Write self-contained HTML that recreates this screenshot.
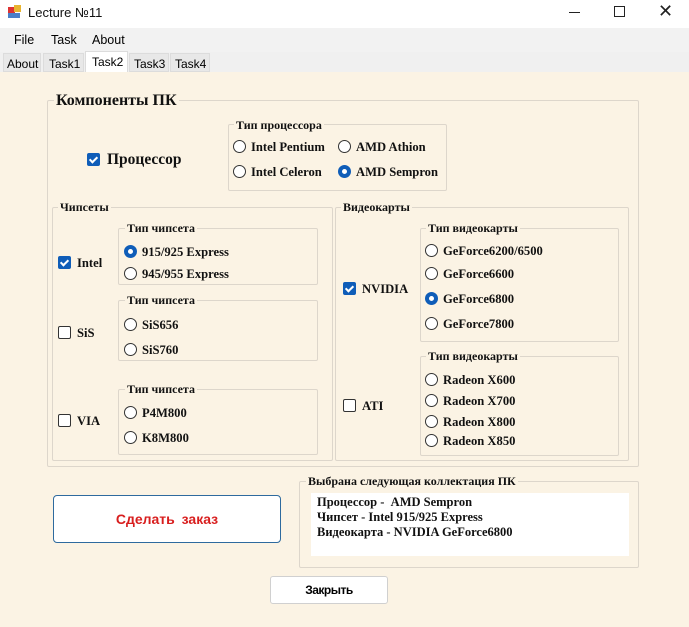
<!DOCTYPE html><html><head><meta charset="utf-8"><style>
*{margin:0;padding:0;box-sizing:border-box}
body{width:689px;height:627px;position:relative;background:#fbf3e4;font-family:"Liberation Serif",serif;overflow:hidden}
.a{position:absolute}
.s{font-family:"Liberation Sans",sans-serif}
.g{position:absolute;border:1px solid #ddd6cb;border-radius:2px}
.lg{position:absolute;background:#fbf3e4;font-weight:bold;font-size:12px;padding:0 2px;line-height:14px;color:#111}
.r{position:absolute;font-weight:bold;font-size:12.6px;color:#111;line-height:14px;padding-left:18px;white-space:nowrap}
.r:before{content:"";position:absolute;left:0;top:0;width:13px;height:13px;border:1px solid #333;border-radius:50%;background:#fff;box-sizing:border-box}
.r.on:before{border:4px solid #0f5db8;background:#fff}
.c{position:absolute;font-weight:bold;font-size:12.6px;color:#111;line-height:14px;padding-left:19px;white-space:nowrap}
.c:before{content:"";position:absolute;left:0;top:0;width:13px;height:13px;border:1px solid #333;border-radius:2px;background:#fff;box-sizing:border-box}
.c.on:before{background:#0f5db8;border-color:#0f5db8}
.c.on:after{content:"";position:absolute;left:4px;top:2px;width:3px;height:6px;border:solid #fff;border-width:0 2px 2px 0;transform:rotate(45deg)}
</style></head><body>
<div class="a" style="left:0;top:0;width:689px;height:28px;background:#fff"></div>
<div class="a" style="left:8px;top:7px;width:7px;height:6px;background:#d33"></div>
<div class="a" style="left:14px;top:5px;width:7px;height:7px;background:#e8b430"></div>
<div class="a" style="left:8px;top:13px;width:12px;height:5px;background:#4a7fc8"></div>
<div class="a s" style="left:28px;top:5px;font-size:13px;color:#111">Lecture №11</div>
<div class="a" style="left:569px;top:12px;width:11px;height:1px;background:#222"></div>
<div class="a" style="left:614px;top:6px;width:11px;height:11px;border:1px solid #222"></div>
<div class="a s" style="left:658px;top:1px;font-size:18px;color:#222">✕</div>
<div class="a" style="left:0;top:28px;width:689px;height:24px;background:#f2f2f2"></div>
<div class="a s" style="left:14px;top:33px;font-size:12.5px">File</div>
<div class="a s" style="left:51px;top:33px;font-size:12.5px">Task</div>
<div class="a s" style="left:92px;top:33px;font-size:12.5px">About</div>
<div class="a" style="left:0;top:52px;width:689px;height:20px;background:#f0f0f0"></div>
<div class="a s" style="left:3px;top:53px;width:38px;height:19px;background:#e8e8e8;border:1px solid #dcdcdc;font-size:12px;padding:3px 3px">About</div>
<div class="a s" style="left:43px;top:53px;width:41px;height:19px;background:#e8e8e8;border:1px solid #dcdcdc;font-size:12px;padding:3px 5px">Task1</div>
<div class="a s" style="left:85px;top:51px;width:43px;height:21px;background:#fff;border:1px solid #dcdcdc;border-bottom:none;font-size:12px;padding:3px 6px">Task2</div>
<div class="a s" style="left:129px;top:53px;width:40px;height:19px;background:#e8e8e8;border:1px solid #dcdcdc;font-size:12px;padding:3px 4px">Task3</div>
<div class="a s" style="left:170px;top:53px;width:40px;height:19px;background:#e8e8e8;border:1px solid #dcdcdc;font-size:12px;padding:3px 4px">Task4</div>

<div class="g" style="left:47px;top:100px;width:592px;height:367px"></div>
<div class="lg" style="left:54px;top:92px;font-size:16px;line-height:17px">Компоненты ПК</div>
<div class="c on" style="left:87px;top:153px;font-size:15.5px;padding-left:20px;line-height:14px"><span style="position:relative;top:0px">Процессор</span></div>

<div class="g" style="left:228px;top:124px;width:219px;height:67px"></div>
<div class="lg" style="left:234px;top:118px">Тип процессора</div>
<div class="r" style="left:233px;top:140px">Intel Pentium</div>
<div class="r" style="left:338px;top:140px">AMD Athion</div>
<div class="r" style="left:233px;top:165px">Intel Celeron</div>
<div class="r on" style="left:338px;top:165px">AMD Sempron</div>

<div class="g" style="left:52px;top:207px;width:281px;height:254px"></div>
<div class="lg" style="left:58px;top:200px">Чипсеты</div>
<div class="c on" style="left:58px;top:256px">Intel</div>
<div class="c" style="left:58px;top:326px">SiS</div>
<div class="c" style="left:58px;top:414px">VIA</div>
<div class="g" style="left:118px;top:228px;width:200px;height:57px"></div>
<div class="lg" style="left:125px;top:221px">Тип чипсета</div>
<div class="r on" style="left:124px;top:245px">915/925 Express</div>
<div class="r" style="left:124px;top:267px">945/955 Express</div>
<div class="g" style="left:118px;top:300px;width:200px;height:61px"></div>
<div class="lg" style="left:125px;top:293px">Тип чипсета</div>
<div class="r" style="left:124px;top:318px">SiS656</div>
<div class="r" style="left:124px;top:343px">SiS760</div>
<div class="g" style="left:118px;top:389px;width:200px;height:66px"></div>
<div class="lg" style="left:125px;top:382px">Тип чипсета</div>
<div class="r" style="left:124px;top:406px">P4M800</div>
<div class="r" style="left:124px;top:431px">K8M800</div>

<div class="g" style="left:335px;top:207px;width:294px;height:254px"></div>
<div class="lg" style="left:341px;top:200px">Видеокарты</div>
<div class="c on" style="left:343px;top:282px">NVIDIA</div>
<div class="c" style="left:343px;top:399px">ATI</div>
<div class="g" style="left:420px;top:228px;width:199px;height:114px"></div>
<div class="lg" style="left:426px;top:221px">Тип видеокарты</div>
<div class="r" style="left:425px;top:244px">GeForce6200/6500</div>
<div class="r" style="left:425px;top:267px">GeForce6600</div>
<div class="r on" style="left:425px;top:292px">GeForce6800</div>
<div class="r" style="left:425px;top:317px">GeForce7800</div>
<div class="g" style="left:420px;top:356px;width:199px;height:100px"></div>
<div class="lg" style="left:426px;top:349px">Тип видеокарты</div>
<div class="r" style="left:425px;top:373px">Radeon X600</div>
<div class="r" style="left:425px;top:394px">Radeon X700</div>
<div class="r" style="left:425px;top:415px">Radeon X800</div>
<div class="r" style="left:425px;top:434px">Radeon X850</div>

<div class="a s" style="left:53px;top:495px;width:228px;height:48px;background:#fff;border:1px solid #2e6a9e;border-radius:4px;color:#d81e1e;font-weight:bold;font-size:14px;text-align:center;line-height:46px;word-spacing:3px">Сделать заказ</div>

<div class="g" style="left:299px;top:481px;width:340px;height:87px"></div>
<div class="lg" style="left:306px;top:474px">Выбрана следующая коллектация ПК</div>
<div class="a" style="left:311px;top:493px;width:318px;height:63px;background:#fff"></div>
<div class="a" style="left:317px;top:495px;font-weight:bold;font-size:12.5px;line-height:15px;color:#111">Процессор - &nbsp;AMD Sempron<br>Чипсет - Intel 915/925 Express<br>Видеокарта - NVIDIA GeForce6800</div>

<div class="a s" style="left:270px;top:576px;width:118px;height:28px;background:#fff;border:1px solid #d0d0d0;border-radius:3px;font-size:12px;font-weight:bold;text-align:center;line-height:26px;letter-spacing:-0.5px">Закрыть</div>
</body></html>
